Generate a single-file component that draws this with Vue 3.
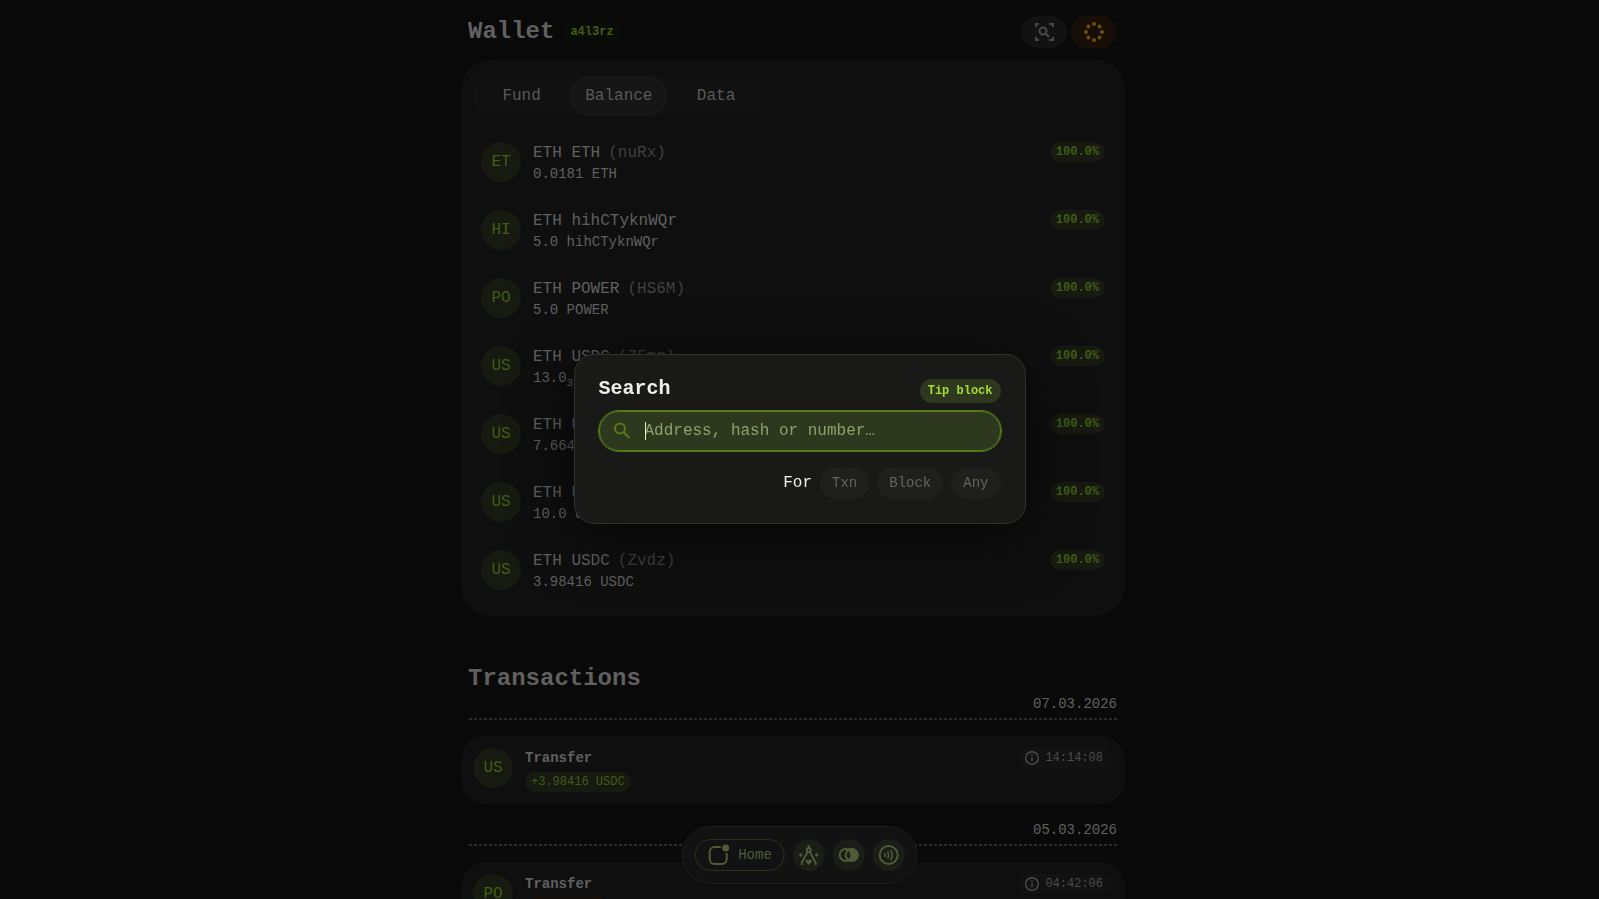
<script setup>
import { ref } from 'vue';

const tabs = ['Fund', 'Balance', 'Data'];
const activeTab = ref('Balance');
const query = ref('');
const targets = ['Txn', 'Block', 'Any'];

const assets = [
    { icon: 'ET', name: 'ETH ETH', id: '(nuRx)', amount: '0.0181 ETH' },
    { icon: 'HI', name: 'ETH hihCTyknWQr', id: '', amount: '5.0 hihCTyknWQr' },
    { icon: 'PO', name: 'ETH POWER', id: '(HS6M)', amount: '5.0 POWER' },
    { icon: 'US', name: 'ETH USDC', id: '(75mg)', amount: '13.0', zeros: '3' },
    { icon: 'US', name: 'ETH U', id: '', amount: '7.664' },
    { icon: 'US', name: 'ETH U', id: '', amount: '10.0 U' },
    { icon: 'US', name: 'ETH USDC', id: '(Zvdz)', amount: '3.98416 USDC' },
];

const days = [
    { date: '07.03.2026', icon: 'US', time: '14:14:08', amount: '+3.98416 USDC', out: false },
    { date: '05.03.2026', icon: 'PO', time: '04:42:06', amount: '-5.0 POWER', out: true },
];
</script>

<template>
<div class="page">
    <main class="wallet">
        <header class="top">
            <h1>Wallet</h1>
            <span class="badge account">a4l3rz</span>
            <div class="actions">
                <button class="action" aria-label="Scan">
                    <svg width="24" height="24" viewBox="0 0 24 24" fill="none" stroke="currentColor" stroke-width="2">
                        <path d="M4 7V4h3M17 4h4v3M21 17v3h-4M7 20H4v-3" />
                        <circle cx="11" cy="11" r="3.5" />
                        <path d="M13.5 13.5l3.500 3.500" />
                    </svg>
                </button>
                <button class="action status" aria-label="Network status">
                    <svg width="24" height="24" viewBox="0 0 24 24" fill="currentColor">
                        <circle cx="12" cy="4" r="2" />
                        <circle cx="17.5" cy="6.5" r="2" />
                        <circle cx="20" cy="12" r="2" />
                        <circle cx="17.5" cy="17.5" r="2" />
                        <circle cx="12" cy="20" r="2" />
                        <circle cx="6.5" cy="17.5" r="2" />
                        <circle cx="4" cy="12" r="2" />
                        <circle cx="6.5" cy="6.5" r="2" />
                    </svg>
                </button>
            </div>
        </header>

        <section class="card">
            <div class="tabs">
                <button v-for="tab in tabs" :key="tab" :class="{ active: tab === activeTab }" @click="activeTab = tab">{{ tab }}</button>
            </div>
            <ul class="assets">
                <li v-for="(asset, i) in assets" :key="i">
                    <span class="avatar">{{ asset.icon }}</span>
                    <div class="info">
                        <p class="name">{{ asset.name }}<span v-if="asset.id">{{ asset.id }}</span></p>
                        <p class="amount">{{ asset.amount }}<sub v-if="asset.zeros">{{ asset.zeros }}</sub></p>
                    </div>
                    <span class="badge">100.0%</span>
                </li>
            </ul>
        </section>

        <h2>Transactions</h2>
        <section v-for="day in days" :key="day.date" class="day">
            <p class="date">{{ day.date }}</p>
            <div class="dashes"></div>
            <article class="tx">
                <span class="avatar">{{ day.icon }}</span>
                <div class="info">
                    <h3>Transfer</h3>
                    <span class="badge value" :class="{ out: day.out }">{{ day.amount }}</span>
                </div>
                <span class="time">
                    <svg width="16" height="16" viewBox="0 0 16 16" fill="none" stroke="currentColor" stroke-width="1.4">
                        <circle cx="8" cy="8" r="6.3" />
                        <path d="M8 7.2v4M8 4.6v1.5" />
                    </svg>
                    {{ day.time }}
                </span>
            </article>
        </section>
    </main>

    <nav class="dock">
        <button class="home">
            <svg width="24" height="24" viewBox="0 0 24 24" fill="none" stroke="currentColor" stroke-width="2">
                <path d="M14 4H8a5 5 0 0 0-5 5v7a5 5 0 0 0 5 5h7a5 5 0 0 0 5-5v-6" />
                <circle cx="19" cy="5" r="3.5" fill="currentColor" stroke="none" />
            </svg>
            Home
        </button>
        <button class="round" aria-label="Tools">
            <svg width="24" height="24" viewBox="0 0 24 24" fill="none" stroke="currentColor" stroke-width="2">
                <path d="M12 2v3M10.800 9L5 20v2M13.200 9L19 20v2" />
                <circle cx="12" cy="7" r="2" />
                <path d="M12 22l-2.800-2.800a1.600 1.600 0 0 1 2.800-1.800a1.600 1.600 0 0 1 2.800 1.800zM4 10l2 2-2 2-2-2zM20 10l2 2-2 2-2-2z" fill="currentColor" stroke="none" />
            </svg>
        </button>
        <button class="round" aria-label="Swap">
            <svg width="24" height="24" viewBox="0 0 24 24" fill="none" stroke="currentColor" stroke-width="2">
                <circle cx="9" cy="12" r="6" />
                <circle cx="15" cy="12" r="6" />
                <path d="M12 6.800A6 6 0 1 1 12 17.200A6 6 0 0 0 12 6.800z" fill="currentColor" />
            </svg>
        </button>
        <button class="round" aria-label="Contactless">
            <svg width="24" height="24" viewBox="0 0 24 24" fill="none" stroke="currentColor" stroke-width="2">
                <circle cx="12" cy="12" r="9" />
                <path d="M8 10q.8 2 0 4M11 8.500q1.800 3.500 0 7M14 7q3 5 0 10" stroke-width="1.600" />
            </svg>
        </button>
    </nav>

    <div class="backdrop">
        <form class="dialog" role="dialog" aria-labelledby="search-title" @submit.prevent>
            <div class="dialog-head">
                <h2 id="search-title">Search</h2>
                <button type="button" class="tip">Tip block</button>
            </div>
            <label class="field">
                <svg width="20" height="20" viewBox="0 0 20 20" fill="none" stroke="currentColor" stroke-width="2">
                    <circle cx="8" cy="7.500" r="5" />
                    <path d="M11.500 11l6 6" />
                </svg>
                <span class="caret"></span>
                <input v-model="query" type="text" aria-label="Search" placeholder="Address, hash or number…" />
            </label>
            <div class="targets">
                <span>For</span>
                <button v-for="target in targets" :key="target" type="button">{{ target }}</button>
            </div>
        </form>
    </div>
</div>
</template>

<style>
body{
    background: #090909;
}
</style>

<style scoped>
.page{
    height: 100vh;
    overflow: hidden;
    padding: 0 13px 0 0;
    box-sizing: border-box;
    background: #090909;
    color: #606060;
    font-family: "Liberation Mono", monospace;
    font-size: 16px;
}

h1, h2, h3, p, ul{
    margin: 0;
    padding: 0;
}

button, input{
    font: inherit;
    border: none;
    padding: 0;
    background: none;
    color: inherit;
}

button{
    cursor: pointer;
}

svg{
    display: block;
    flex: none;
}

.wallet{
    max-width: 664px;
    margin: 0 auto;
}

.top{
    display: flex;
    align-items: center;
    gap: 8px;
    padding: 16px 8px 12px 7px;
}

h1, h2{
    font-size: 24px;
    line-height: 32px;
}

.badge{
    padding: 0 6px;
    border-radius: 12px;
    background: #161a10;
    color: #415c17;
    font-size: 12px;
    font-weight: bold;
    line-height: 20px;
}

.account{
    padding: 0 8px;
    line-height: 24px;
    background: #0a0d07;
}

.actions{
    display: flex;
    gap: 4px;
    margin-left: auto;
}

.action{
    display: grid;
    place-items: center;
    width: 46px;
    height: 32px;
    border-radius: 16px;
    background: #121212;
    color: #484848;
}

.status{
    background: #170f07;
    color: #6b4d08;
}

.card{
    padding: 16px 12px 12px;
    border-radius: 30px;
    background: #0f0f0f;
}

.tabs{
    display: inline-grid;
    grid-template-columns: repeat(3, 1fr);
    vertical-align: top;
    border-radius: 20px;
    background: #111;
}

.tabs button{
    height: 40px;
    padding: 0 14px;
    border: 1px solid transparent;
    border-radius: 20px;
    color: #595959;
}

.tabs .active{
    background: #161616;
    border-color: #1b1b1b;
}

.assets{
    margin-top: 12px;
    list-style: none;
}

.assets li{
    display: flex;
    align-items: flex-start;
    gap: 12px;
    padding: 14px 8px 12px;
}

.avatar{
    flex: none;
    width: 40px;
    height: 40px;
    border-radius: 50%;
    background: #161a10;
    color: #415c17;
    line-height: 40px;
    text-align: center;
}

.info{
    display: flex;
    flex: 1;
    flex-direction: column;
    align-items: flex-start;
}

.name{
    line-height: 22px;
}

.name span{
    margin-left: 8px;
    color: #404040;
}

.amount{
    font-size: 14px;
    line-height: 20px;
}

sub{
    font-size: 11px;
    line-height: 1px;
}

.card + h2{
    margin-top: 47px;
    padding-left: 7px;
}

.date{
    padding: 0 8px;
    font-size: 14px;
    line-height: 18px;
    text-align: right;
}

.dashes{
    height: 2px;
    margin: 5px 8px 16px;
    background: repeating-linear-gradient(to right, #2a2a2a 0 3px, transparent 3px 5px);
}

.tx{
    display: flex;
    align-items: flex-start;
    gap: 12px;
    margin-bottom: 17px;
    padding: 12px;
    border-radius: 24px;
    background: #0f0f0f;
}

h3{
    font-size: 14px;
    line-height: 20px;
    margin-bottom: 4px;
}

.value{
    font-weight: normal;
}

.out{
    background: #1b1007;
    color: #6b4d08;
}

.time{
    display: flex;
    align-items: center;
    gap: 5px;
    padding: 0 10px 0 6px;
    border-radius: 10px;
    background: #121212;
    color: #4c4c4c;
    font-size: 12px;
    line-height: 20px;
}

.dock{
    position: fixed;
    bottom: 15px;
    left: 50%;
    transform: translateX(-50%);
    display: flex;
    gap: 8px;
    padding: 12px;
    border: 1px solid #1d1d1d;
    border-radius: 29px;
    background: #121212;
    color: #505a36;
}

.home{
    display: flex;
    align-items: center;
    gap: 8px;
    height: 32px;
    padding: 0 12px 0 11px;
    border: 1px solid #2c311e;
    border-radius: 16px;
    font-size: 14px;
}

.round{
    display: grid;
    place-items: center;
    width: 32px;
    height: 32px;
    border-radius: 50%;
    background: #1b1d17;
}

.backdrop{
    position: fixed;
    inset: 0;
    display: flex;
    align-items: center;
    justify-content: center;
    padding-bottom: 22px;
}

.dialog{
    width: 402px;
    padding: 24px;
    border: 1px solid #313131;
    border-radius: 20px;
    background: #191918;
    color: #eee;
    box-shadow: 0 12px 60px rgba(0, 0, 0, 0.7);
}

.dialog-head{
    display: flex;
    align-items: flex-start;
    justify-content: space-between;
    margin-bottom: 8px;
}

.dialog-head h2{
    font-size: 20px;
    line-height: 20px;
}

.tip{
    height: 24px;
    padding: 0 8px;
    border-radius: 12px;
    background: #2e381e;
    color: #a5dc34;
    font-size: 12px;
    font-weight: bold;
}

.field{
    position: relative;
    display: flex;
    align-items: center;
    gap: 13px;
    height: 38px;
    padding: 0 12px;
    border: 1px solid #567a18;
    border-radius: 20px;
    outline: 1px solid #567a18;
    background: #2e381e;
    color: #567a18;
}

.field input{
    flex: 1;
    min-width: 0;
    outline: none;
    color: #d9f2a6;
}

.field input::placeholder{
    color: #8ba169;
    opacity: 1;
}

.caret{
    position: absolute;
    left: 45px;
    width: 1px;
    height: 18px;
    background: #e2f7b8;
}

.targets{
    display: flex;
    align-items: center;
    justify-content: flex-end;
    gap: 8px;
    margin-top: 16px;
}

.targets button{
    height: 32px;
    padding: 0 12px;
    border-radius: 16px;
    background: #1f1f1e;
    color: #636360;
    font-size: 14px;
}
</style>
